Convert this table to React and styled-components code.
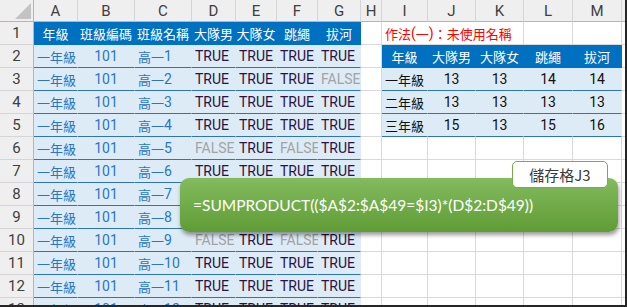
import React from "react";
import styled, { createGlobalStyle } from "styled-components";

const GlobalStyle = createGlobalStyle`
  body {
    margin: 0;
    background: #fff;
    font-family: Roboto, "Noto Sans CJK TC", sans-serif;
  }
`;

const COLS = [34, 44, 57, 57, 44, 41, 41, 43, 21, 46, 48, 48, 49, 49];
const LETTERS = ["A", "B", "C", "D", "E", "F", "G", "H", "I", "J", "K", "L", "M", ""];

const leftHead = ["年級", "班級編碼", "班級名稱", "大隊男", "大隊女", "跳繩", "拔河"];
const rightHead = ["年級", "大隊男", "大隊女", "跳繩", "拔河"];

// TRUE / FALSE flags for columns D-G, rows 2..13
const flags = [
  [1, 1, 1, 1],
  [1, 1, 1, 0],
  [1, 1, 1, 1],
  [1, 1, 1, 1],
  [0, 1, 0, 1],
  [1, 1, 1, 1],
  [1, 1, 1, 1],
  [1, 1, 1, 1],
  [0, 1, 0, 1],
  [1, 1, 1, 1],
  [1, 1, 1, 1],
  [1, 1, 1, 1],
];

const summary = [
  ["一年級", 13, 13, 14, 14],
  ["二年級", 13, 13, 13, 13],
  ["三年級", 15, 13, 15, 16],
];

const HAN = /([\u2e80-\u9fff\uff00-\uffef]+)/;

const mix = (text) =>
  String(text)
    .split(HAN)
    .filter(Boolean)
    .map((part, i) => (HAN.test(part) ? <Han key={i}>{part}</Han> : part));

const rowCells = (r) => {
  const cells = [];
  for (let c = 0; c < 14; c++) {
    let cell = { kind: "plain" };
    if (c <= 6) {
      if (r === 1) {
        cell = { kind: "head", text: leftHead[c], align: "center" };
      } else {
        const f = flags[r - 2];
        if (c === 0) cell = { kind: "band", text: "一年級", tone: "blue" };
        else if (c === 1) cell = { kind: "band", text: "101", tone: "blue", align: "center" };
        else if (c === 2) cell = { kind: "band", text: `高一${r - 1}`, tone: "blue" };
        else {
          const on = f[c - 3];
          cell = { kind: "band", text: on ? "TRUE" : "FALSE", tone: on ? "ink" : "mute" };
        }
      }
    } else if (c >= 8 && c <= 12) {
      const k = c - 8;
      if (r === 1) {
        cell = { kind: "plain", open: k < 2, text: k === 0 ? "作法(一)：未使用名稱" : "", tone: "red" };
      } else if (r === 2) {
        cell = { kind: "head", text: rightHead[k], align: "center" };
      } else if (r <= 5) {
        const v = summary[r - 3][k];
        cell = { kind: "band", text: v, align: k === 0 ? "left" : "center" };
      }
    }
    cells.push(cell);
  }
  return cells;
};

const App = () => {
  const rows = Array.from({ length: 13 }, (_, i) => i + 1);

  return (
    <>
      <GlobalStyle />
      <Frame>
        <Sheet>
          <Corner>
            <svg width="16" height="16" viewBox="0 0 16 16">
              <polygon points="16,0 16,16 0,16" fill="#c3c3c3" />
            </svg>
          </Corner>
          {LETTERS.map((l, i) => (
            <ColHead key={l || i}>{l}</ColHead>
          ))}
          {rows.map((r) => (
            <React.Fragment key={r}>
              <RowHead>{r}</RowHead>
              {rowCells(r).map((cell, c) => (
                <Cell
                  key={c}
                  $kind={cell.kind}
                  $align={cell.align}
                  $tone={cell.tone}
                  $open={cell.open}
                >
                  {cell.text !== undefined && mix(cell.text)}
                </Cell>
              ))}
            </React.Fragment>
          ))}
        </Sheet>

        <Callout>=SUMPRODUCT(($A$2:$A$49=$I3)*(D$2:D$49))</Callout>
        <Tag>儲存格J3</Tag>
      </Frame>
    </>
  );
};

export default App;

const Frame = styled.div`
  position: relative;
  width: 627px;
  height: 307px;
  box-sizing: border-box;
  border-right: 2px solid #262626;
  border-bottom: 2px solid #262626;
  overflow: hidden;
`;

const Sheet = styled.div`
  display: grid;
  grid-template-columns: ${COLS.map((w) => `${w}px`).join(" ")} 1fr;
  grid-template-rows: 22px repeat(13, 23px);
  font-size: 14px;
`;

const Han = styled.span`
  font-family: "Noto Sans CJK TC", sans-serif;
  font-size: 13px;
`;

const HeadBase = styled.div`
  box-sizing: border-box;
  background: #efefef;
  color: #404040;
  font-size: 15px;
  display: flex;
  align-items: center;
  justify-content: center;
  border-right: 1px solid #d5d5d5;
  border-bottom: 1px solid #d5d5d5;
`;

const Corner = styled(HeadBase)`
  align-items: flex-end;
  justify-content: flex-end;
  padding: 0 2px 2px 0;
  border-bottom-color: #b5b5b5;
  border-right-color: #b5b5b5;
`;

const ColHead = styled(HeadBase)`
  border-bottom-color: #b5b5b5;
`;

const RowHead = styled(HeadBase)`
  border-right-color: #b5b5b5;
`;

const tones = {
  blue: "#2a76c2",
  ink: "#2b1242",
  mute: "#a3a3a3",
  red: "#ff0000",
};

const Cell = styled.div`
  box-sizing: border-box;
  min-width: 0;
  display: flex;
  align-items: center;
  justify-content: ${(p) => (p.$align === "center" ? "center" : "flex-start")};
  padding: 0 3px;
  white-space: nowrap;
  color: ${(p) => (p.$tone ? tones[p.$tone] : "#111")};
  border-right: 1px solid ${(p) => (p.$open ? "transparent" : "#d9d9d9")};
  border-bottom: 1px solid #d9d9d9;

  ${(p) =>
    p.$kind === "head" &&
    `
    background: #0070c0;
    color: #fff;
    border-right-color: transparent;
    border-bottom-color: transparent;
  `}

  ${(p) =>
    p.$kind === "band" &&
    `
    background: #ddebf7;
    border-right-color: transparent;
    border-bottom-color: #2e75b6;
  `}
`;

const Callout = styled.div`
  position: absolute;
  left: 180px;
  top: 178px;
  width: 438px;
  height: 54px;
  box-sizing: border-box;
  display: flex;
  align-items: center;
  padding-left: 13px;
  border-radius: 9px;
  background: linear-gradient(#83bb5e, #5f9c35);
  box-shadow: 1px 3px 4px rgba(0, 0, 0, 0.4);
  color: #fff;
  font-family: Lato, "Liberation Sans", sans-serif;
  font-size: 15.5px;
  white-space: nowrap;
`;

const Tag = styled.div`
  position: absolute;
  left: 512px;
  top: 161px;
  width: 96px;
  height: 27px;
  box-sizing: border-box;
  display: flex;
  align-items: center;
  justify-content: center;
  background: #fff;
  border: 1px solid #77ab4c;
  border-radius: 5px;
  color: #3a3a3a;
  font-family: "Noto Sans CJK TC", sans-serif;
  font-size: 15px;
`;
